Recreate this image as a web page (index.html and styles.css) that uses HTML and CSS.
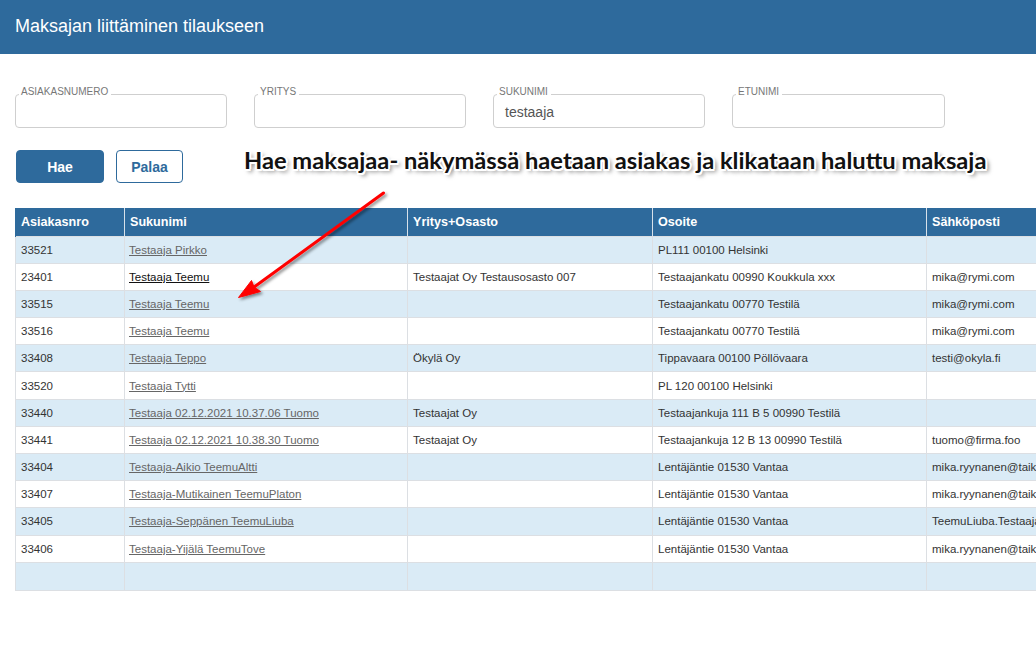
FILE: index.html
```html
<!DOCTYPE html>
<html lang="fi">
<head>
<meta charset="utf-8">
<title>Maksajan liittäminen tilaukseen</title>
<link rel="stylesheet" href="styles.css">
</head>
<body>
<header class="topbar"><h1 class="title">Maksajan liittäminen tilaukseen</h1></header>
<main class="content">
  <div class="filters">
    <div class="field"><span class="field-label">ASIAKASNUMERO</span><span class="field-value"></span></div>
    <div class="field"><span class="field-label">YRITYS</span><span class="field-value"></span></div>
    <div class="field"><span class="field-label">SUKUNIMI</span><span class="field-value">testaaja</span></div>
    <div class="field"><span class="field-label">ETUNIMI</span><span class="field-value"></span></div>
  </div>
  <div class="actions">
    <button class="btn btn-primary">Hae</button>
    <button class="btn btn-outline">Palaa</button>
  </div>
  <div class="table-wrap">
    <table class="grid">
      <colgroup><col class="c1"><col class="c2"><col class="c3"><col class="c4"><col class="c5"></colgroup>
      <thead>
        <tr><th>Asiakasnro</th><th>Sukunimi</th><th>Yritys+Osasto</th><th>Osoite</th><th>Sähköposti</th></tr>
      </thead>
      <tbody>
        <tr><td>33521</td><td><a href="#">Testaaja Pirkko</a></td><td></td><td>PL111 00100 Helsinki</td><td></td></tr>
        <tr><td>23401</td><td><a href="#" class="active">Testaaja Teemu</a></td><td>Testaajat Oy Testausosasto 007</td><td>Testaajankatu 00990 Koukkula xxx</td><td>mika@rymi.com</td></tr>
        <tr><td>33515</td><td><a href="#">Testaaja Teemu</a></td><td></td><td>Testaajankatu 00770 Testilä</td><td>mika@rymi.com</td></tr>
        <tr><td>33516</td><td><a href="#">Testaaja Teemu</a></td><td></td><td>Testaajankatu 00770 Testilä</td><td>mika@rymi.com</td></tr>
        <tr><td>33408</td><td><a href="#">Testaaja Teppo</a></td><td>Ökylä Oy</td><td>Tippavaara 00100 Pöllövaara</td><td>testi@okyla.fi</td></tr>
        <tr><td>33520</td><td><a href="#">Testaaja Tytti</a></td><td></td><td>PL 120 00100 Helsinki</td><td></td></tr>
        <tr><td>33440</td><td><a href="#">Testaaja 02.12.2021 10.37.06 Tuomo</a></td><td>Testaajat Oy</td><td>Testaajankuja 111 B 5 00990 Testilä</td><td></td></tr>
        <tr><td>33441</td><td><a href="#">Testaaja 02.12.2021 10.38.30 Tuomo</a></td><td>Testaajat Oy</td><td>Testaajankuja 12 B 13 00990 Testilä</td><td>tuomo@firma.foo</td></tr>
        <tr><td>33404</td><td><a href="#">Testaaja-Aikio TeemuAltti</a></td><td></td><td>Lentäjäntie 01530 Vantaa</td><td>mika.ryynanen@taike.fi</td></tr>
        <tr><td>33407</td><td><a href="#">Testaaja-Mutikainen TeemuPlaton</a></td><td></td><td>Lentäjäntie 01530 Vantaa</td><td>mika.ryynanen@taike.fi</td></tr>
        <tr><td>33405</td><td><a href="#">Testaaja-Seppänen TeemuLiuba</a></td><td></td><td>Lentäjäntie 01530 Vantaa</td><td>TeemuLiuba.Testaaja@taike.fi</td></tr>
        <tr><td>33406</td><td><a href="#">Testaaja-Yijälä TeemuTove</a></td><td></td><td>Lentäjäntie 01530 Vantaa</td><td>mika.ryynanen@taike.fi</td></tr>
        <tr class="empty"><td></td><td></td><td></td><td></td><td></td></tr>
      </tbody>
    </table>
  </div>
</main>
<div class="annotation">Hae maksajaa- näkymässä haetaan asiakas ja klikataan haluttu maksaja</div>
<svg class="arrow" width="1036" height="646" viewBox="0 0 1036 646" aria-hidden="true">
  <defs>
    <filter id="sh" x="-20%" y="-20%" width="140%" height="140%">
      <feDropShadow dx="2" dy="2" stdDeviation="1.6" flood-color="#000" flood-opacity="0.45"/>
    </filter>
  </defs>
  <g filter="url(#sh)">
    <line x1="383.5" y1="193" x2="250" y2="290" stroke="#f00" stroke-width="3" stroke-linecap="round"/>
    <path d="M238.5 297.5 L251.5 280.5 L254 287 L260.5 291.5 Z" fill="#f00" stroke="#f00" stroke-width="1" stroke-linejoin="round"/>
  </g>
</svg>
</body>
</html>
```
FILE: styles.css
```css
html, body {
  margin: 0;
  padding: 0;
  background: #fff;
  overflow: hidden;
}
body {
  font-family: "Liberation Sans", Arial, sans-serif;
  color: #333;
  width: 1036px;
  height: 646px;
  position: relative;
}
.topbar {
  background: #2e6a9c;
  height: 54px;
  display: flex;
  align-items: center;
  padding: 0 15px;
}
.title {
  margin: 0;
  color: #fff;
  font-weight: normal;
  font-size: 18px;
  line-height: 20px;
  padding-bottom: 3px;
}
.content {
  padding: 40px 0 0 15px;
}
.filters {
  display: flex;
  gap: 27px;
}
.field {
  position: relative;
  box-sizing: border-box;
  width: 212px;
  height: 34px;
  border: 1px solid #cfcfcf;
  border-radius: 4px;
  display: flex;
  align-items: center;
  padding: 2px 0 0 11px;
}
.field:last-child { width: 213px; }
.field-label {
  position: absolute;
  left: 3px;
  top: -8px;
  padding: 0 3px 0 2px;
  background: #fff;
  font-size: 10px;
  line-height: 10px;
  color: #777;
}
.field-value {
  font-size: 14px;
  color: #555;
}
.actions {
  display: flex;
  gap: 12px;
  margin-top: 22px;
  padding-left: 1px;
}
.btn {
  font-family: "Liberation Sans", Arial, sans-serif;
  font-weight: bold;
  font-size: 14px;
  height: 33px;
  border-radius: 4px;
  cursor: pointer;
  padding: 0;
}
.btn-primary {
  width: 88px;
  background: #2e6a9c;
  color: #fff;
  border: 1px solid #2e6a9c;
}
.btn-outline {
  width: 67px;
  background: #fff;
  color: #2e6a9c;
  border: 1px solid #2e6a9c;
}
.table-wrap {
  margin-top: 25px;
  overflow: hidden;
}
.grid {
  border-collapse: collapse;
  table-layout: fixed;
  width: 1161px;
  font-size: 11.5px;
}
.c1 { width: 109px; }
.c2 { width: 283px; }
.c3 { width: 245px; }
.c4 { width: 274px; }
.c5 { width: 250px; }
.grid th {
  background: #2e6a9c;
  color: #fff;
  font-weight: bold;
  font-size: 12.6px;
  text-align: left;
  height: 28px;
  padding: 0 5px;
  border-left: 1px solid #d7e1ea;
  box-sizing: border-box;
}
.grid th:first-child { border-left-color: #2e6a9c; }
.grid td {
  height: 27.2px;
  padding: 0 4px 0 5px;
  border: 1px solid #dcdfe3;
  white-space: nowrap;
  overflow: hidden;
  color: #333;
  box-sizing: border-box;
}
.grid td:nth-child(2) { padding-left: 4px; }
.grid tbody tr:nth-child(odd) td { background: #daebf6; }
.grid tbody tr:nth-child(even) td { background: #fff; }
.grid tr.empty td { height: 28px; }
.grid a {
  color: #666;
  text-decoration: underline;
}
.grid a.active { color: #111; }
.annotation {
  position: absolute;
  left: 244px;
  top: 145px;
  font-family: Lato, "Open Sans", sans-serif;
  font-weight: bold;
  font-size: 23.7px;
  line-height: 30px;
  color: #111;
  white-space: nowrap;
  text-shadow:
    -1.5px -1.5px 0 #fff, 1.5px -1.5px 0 #fff, -1.5px 1.5px 0 #fff, 1.5px 1.5px 0 #fff,
    0 -2px 0 #fff, 0 2px 0 #fff, -2px 0 0 #fff, 2px 0 0 #fff,
    3px 3px 4px rgba(0,0,0,0.55);
}
.arrow {
  position: absolute;
  left: 0;
  top: 0;
  pointer-events: none;
}
```
